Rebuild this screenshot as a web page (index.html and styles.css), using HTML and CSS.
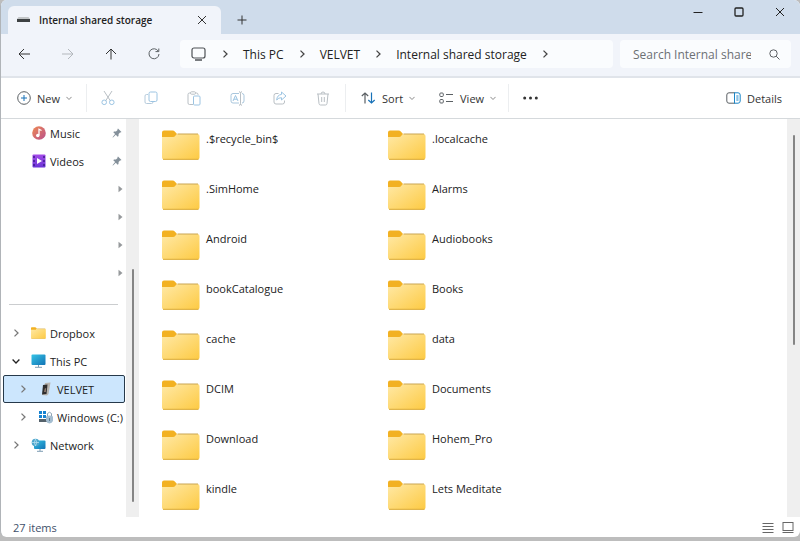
FILE: index.html
```html
<!DOCTYPE html>
<html lang="en">
<head>
	<meta charset="utf-8">
	<title>Internal shared storage</title>
	<link rel="stylesheet" href="styles.css">
</head>
<body>
	<!-- shared icons -->
	<svg class="defs" width="0" height="0" aria-hidden="true">
		<defs>
			<linearGradient id="folderFill" x1="0" y1="0" x2="1" y2="1">
				<stop offset="0" stop-color="#ffe9a6"/>
				<stop offset="1" stop-color="#fdca43"/>
			</linearGradient>
			<linearGradient id="screenFill" x1="0" y1="0" x2="1" y2="1">
				<stop offset="0" stop-color="#35c4e6"/>
				<stop offset="1" stop-color="#1273b5"/>
			</linearGradient>
			<linearGradient id="musicFill" x1="0" y1="0" x2="1" y2="1">
				<stop offset="0" stop-color="#ef8a52"/>
				<stop offset="1" stop-color="#b94f8d"/>
			</linearGradient>
			<linearGradient id="videoFill" x1="0" y1="0" x2="0" y2="1">
				<stop offset="0" stop-color="#a44be8"/>
				<stop offset="1" stop-color="#6a35d6"/>
			</linearGradient>
		</defs>
		<symbol id="folder" viewBox="0 0 38 30">
			<path d="M0 10V2.5Q0 .5 2 .5H10.5Q12 .5 13 1.8L15 4L12 10Z" fill="#f2b122"/>
			<path d="M0 7H11Q12.5 7 13.5 5.5Q14.5 4 16 4H35.5Q37.5 4 37.5 6V27.5Q37.5 29.5 35.5 29.5H2Q0 29.5 0 27.5Z" fill="url(#folderFill)"/>
			<path d="M15.5 4H36" fill="none" stroke="#c9a553"/>
			<path d="M1 29.3H36.5" fill="none" stroke="#d9a833"/>
		</symbol>
		<symbol id="right" viewBox="0 0 8 8">
			<path d="M2.5 .6L6 4L2.5 7.4" fill="none" stroke="currentColor" stroke-width="1.3"/>
		</symbol>
		<symbol id="down" viewBox="0 0 8 8">
			<path d="M.6 2.5L4 6L7.4 2.5" fill="none" stroke="currentColor" stroke-width="1.3"/>
		</symbol>
		<symbol id="close" viewBox="0 0 10 10">
			<path d="M1 1L9 9M9 1L1 9" fill="none" stroke="currentColor"/>
		</symbol>
		<symbol id="pin" viewBox="0 0 10 10">
			<path d="M6 .5L9.5 4L8.5 4.6L8 4.4L6.6 6L6.5 8L5.7 8.7L3.8 6.8L1 9.4L.5 9.2L3.1 6.1L1.3 4.3L2 3.5L4 3.4L5.6 2L5.4 1.3Z" fill="#84909a"/>
		</symbol>
		<symbol id="arrow" viewBox="0 0 8 10">
			<path d="M1.5 1.8L5.5 5L1.5 8.2Z" fill="#96999c"/>
		</symbol>
	</svg>

	<div class="window">
		<header class="titlebar">
			<div class="tab">
				<svg class="drive" width="13" height="6" viewBox="0 0 13 6"><path d="M1.5 0H11.5L13 2H0Z" fill="#c3c6c8"/><path d="M0 2H13V5H0Z" fill="#3d4143"/></svg>
				<span class="tab-title">Internal shared storage</span>
				<button class="tab-close" aria-label="Close tab"><svg width="10" height="10"><use href="#close"/></svg></button>
			</div>
			<button class="tab-add" aria-label="New tab"><svg width="10" height="10" viewBox="0 0 10 10"><path d="M5 .5V9.5M.5 5H9.5" stroke="currentColor"/></svg></button>
			<div class="controls">
				<button aria-label="Minimize"><svg width="10" height="10" viewBox="0 0 10 10"><path d="M.5 5.5H9.5" stroke="currentColor"/></svg></button>
				<button aria-label="Maximize"><svg width="10" height="10" viewBox="0 0 10 10"><rect x="1" y="1" width="8" height="8" rx="1" fill="none" stroke="currentColor" stroke-width="1.3"/></svg></button>
				<button aria-label="Close"><svg width="10" height="10"><use href="#close"/></svg></button>
			</div>
		</header>

		<nav class="navbar">
			<div class="history">
				<button aria-label="Back"><svg width="13" height="12" viewBox="0 0 13 12"><path d="M12 6H1M6 1L1 6L6 11" fill="none" stroke="currentColor"/></svg></button>
				<button aria-label="Forward" disabled><svg width="13" height="12" viewBox="0 0 13 12"><path d="M1 6H12M7 1L12 6L7 11" fill="none" stroke="currentColor"/></svg></button>
				<button aria-label="Up"><svg width="12" height="12" viewBox="0 0 12 12"><path d="M6 11.5V1M1 6L6 1L11 6" fill="none" stroke="currentColor"/></svg></button>
				<button aria-label="Refresh"><svg width="12" height="12" viewBox="0 0 12 12"><path d="M10.3 3.2A5 5 0 1 0 11 6M10.8 .5V3.6H7.5" fill="none" stroke="#5b6064"/></svg></button>
			</div>
			<div class="address">
				<svg class="device" width="15" height="14" viewBox="0 0 15 14"><rect x="1" y="1" width="13" height="10" rx="2" fill="none" stroke="#4c5054" stroke-width="1.2"/><path d="M4 13H11" stroke="#4c5054" stroke-width="1.4"/></svg>
				<svg class="sep" width="8" height="8"><use href="#right"/></svg>
				<a href="#">This PC</a>
				<svg class="sep" width="8" height="8"><use href="#right"/></svg>
				<a href="#">VELVET</a>
				<svg class="sep" width="8" height="8"><use href="#right"/></svg>
				<a href="#">Internal shared storage</a>
				<svg class="sep" width="8" height="8"><use href="#right"/></svg>
			</div>
			<div class="search">
				<input type="text" aria-label="Search" placeholder="Search Internal shared storage">
				<svg width="11" height="11" viewBox="0 0 11 11"><circle cx="4.5" cy="4.5" r="3.7" fill="none" stroke="#5c6064"/><path d="M7.2 7.2L10.5 10.5" stroke="#5c6064"/></svg>
			</div>
		</nav>

		<div class="toolbar">
			<div class="group new">
				<button class="command">
					<svg width="14" height="14" viewBox="0 0 14 14"><circle cx="7" cy="7" r="6.3" fill="none" stroke="#5b6064"/><path d="M7 4V10M4 7H10" stroke="#1872b8"/></svg>
					New
					<svg class="more" width="6" height="6"><use href="#down"/></svg>
				</button>
			</div>
			<div class="group actions">
				<button aria-label="Cut" disabled><svg width="14" height="16" viewBox="0 0 14 16" fill="none"><path d="M3 1L9.5 11M11 1L4.5 11" stroke="#b9bfc4"/><circle cx="3.2" cy="12.3" r="2.3" stroke="#9cc4e2"/><circle cx="10.8" cy="12.3" r="2.3" stroke="#9cc4e2"/></svg></button>
				<button aria-label="Copy" disabled><svg width="14" height="14" viewBox="0 0 14 14" fill="none"><path d="M4 3.5H2.5Q1 3.5 1 5V11Q1 12.5 2.5 12.5H7.5Q9 12.5 9 11" stroke="#b5cadb"/><rect x="5" y="1" width="8" height="9.5" rx="1.5" stroke="#9cc4e2"/></svg></button>
				<button aria-label="Paste" disabled><svg width="14" height="15" viewBox="0 0 14 15" fill="none"><path d="M6 13.5H2.5Q1 13.5 1 12V3.5Q1 2 2.5 2H3.5M8.5 2H9.5Q11 2 11 3.5V4" stroke="#b9bfc4"/><rect x="3.5" y=".8" width="5" height="2.4" rx="1" stroke="#b9bfc4"/><rect x="6.5" y="5" width="6.5" height="9" rx="1" stroke="#9cc4e2"/></svg></button>
				<button aria-label="Rename" disabled><svg width="15" height="15" viewBox="0 0 15 15" fill="none"><path d="M9 2.5H3Q1 2.5 1 4.5V10Q1 12 3 12H9M12 2.5Q14 2.5 14 4.5V10Q14 12 12 12" stroke="#a9c6dc"/><path d="M9 .7Q10.5 .7 10.5 2.2V12.8Q10.5 14.3 9 14.3M12 .7Q10.5 .7 10.5 2.2M12 14.3Q10.5 14.3 10.5 12.8" stroke="#b9bfc4"/><path d="M3 10L5.5 4.5L8 10M4 8.2H7" stroke="#9cc4e2"/></svg></button>
				<button aria-label="Share" disabled><svg width="14" height="14" viewBox="0 0 14 14" fill="none"><path d="M5.5 2.5H3Q1 2.5 1 4.5V11Q1 13 3 13H9.5Q11.5 13 11.5 11V9.5" stroke="#b9bfc4"/><path d="M8.5 1L13 5L8.5 9V6.7Q5.5 6.5 3.7 9Q4 4 8.5 3.4Z" stroke="#9cc4e2"/></svg></button>
				<button aria-label="Delete" disabled><svg width="14" height="15" viewBox="0 0 14 15" fill="none" stroke="#b9bfc4"><path d="M1 3H13M5 3Q5 1 7 1Q9 1 9 3M2 3L3 12.5Q3.2 14 4.5 14H9.5Q10.8 14 11 12.5L12 3M5.7 6V11M8.3 6V11"/></svg></button>
			</div>
			<div class="group arrange">
				<button class="command">
					<svg width="15" height="12" viewBox="0 0 15 12" fill="none"><path d="M4 11.5V1M.8 4L4 1L7.2 4" stroke="#5b6064" stroke-width="1.2"/><path d="M10.5 .5V11M7.3 8L10.5 11L13.7 8" stroke="#1872b8" stroke-width="1.2"/></svg>
					Sort
					<svg class="more" width="6" height="6"><use href="#down"/></svg>
				</button>
				<button class="command">
					<svg width="15" height="12" viewBox="0 0 15 12" fill="none" stroke="#5b6064"><rect x=".8" y="1" width="3.5" height="3.5" rx="1"/><rect x=".8" y="7.5" width="3.5" height="3.5" rx="1"/><path d="M7 2.5H14M7 9.5H14"/></svg>
					View
					<svg class="more" width="6" height="6"><use href="#down"/></svg>
				</button>
			</div>
			<button class="dots" aria-label="See more"><svg width="15" height="4" viewBox="0 0 15 4" fill="#333"><circle cx="1.7" cy="2" r="1.5"/><circle cx="7.5" cy="2" r="1.5"/><circle cx="13.3" cy="2" r="1.5"/></svg></button>
			<button class="command details">
				<svg width="15" height="12" viewBox="0 0 15 12" fill="none"><path d="M9 .8H3Q.8 .8 .8 3V9Q.8 11.2 3 11.2H9" stroke="#5b6064"/><path d="M8.5 .8H12Q14.2 .8 14.2 3V9Q14.2 11.2 12 11.2H8.5ZM10.3 4H12.5M10.3 6H12.5M10.3 8H12.5" stroke="#1b86c8"/></svg>
				Details
			</button>
		</div>

		<div class="content">
			<aside class="sidebar">
				<ul class="tree">
					<li><a class="quick" href="#"><svg width="14" height="14" viewBox="0 0 14 14"><circle cx="7" cy="7" r="6.8" fill="url(#musicFill)"/><path d="M7 9.3V3.2L9.5 4.5" fill="none" stroke="#fff" stroke-width="1.3"/><circle cx="5.8" cy="9.5" r="1.7" fill="#fff"/></svg>Music<svg class="mark" width="10" height="10"><use href="#pin"/></svg></a></li>
					<li><a class="quick" href="#"><svg width="14" height="14" viewBox="0 0 14 14"><rect x=".5" y=".5" width="13" height="13" rx="1" fill="url(#videoFill)"/><path d="M2 2V12M12 2V12" stroke="#3c1c8e" stroke-width="1.5" stroke-dasharray="2 2"/><path d="M5 4L10 7L5 10Z" fill="#fff"/></svg>Videos<svg class="mark" width="10" height="10"><use href="#pin"/></svg></a></li>
					<li class="blank"><svg width="8" height="10"><use href="#arrow"/></svg></li>
					<li class="blank"><svg width="8" height="10"><use href="#arrow"/></svg></li>
					<li class="blank"><svg width="8" height="10"><use href="#arrow"/></svg></li>
					<li class="blank"><svg width="8" height="10"><use href="#arrow"/></svg></li>
				</ul>
				<hr>
				<ul class="tree">
					<li><a href="#"><svg class="toggle" width="8" height="8"><use href="#right"/></svg><svg width="15" height="12" viewBox="0 0 38 30"><use href="#folder"/></svg>Dropbox</a></li>
					<li><a href="#"><svg class="toggle open" width="8" height="8"><use href="#down"/></svg><svg width="15" height="14" viewBox="0 0 15 14"><rect x=".5" y=".5" width="14" height="10.5" rx="1" fill="url(#screenFill)"/><path d="M7.5 11V13M4 13.3H11" stroke="#7d9db3"/></svg>This PC</a></li>
					<li><a class="child selected" href="#"><svg class="toggle" width="8" height="8"><use href="#right"/></svg><svg width="15" height="14" viewBox="0 0 15 14"><path d="M7 1L12.5 .5L10.5 12L9 13.5L4 13Z" fill="#b7b4af"/><path d="M5 3L9.5 2.5L8.5 12L4 12.5Z" fill="#2e2d2e"/><path d="M6.8 6.5L8.2 6L7.8 10L6 10Z" fill="#8f7c70"/></svg>VELVET</a></li>
					<li><a class="child" href="#"><svg class="toggle" width="8" height="8"><use href="#right"/></svg><svg width="15" height="14" viewBox="0 0 15 14"><path d="M1 1H4V4H1ZM5 1H8V4H5ZM1 5H4V8H1ZM5 5H8V8H5Z" fill="#1683d1"/><path d="M1 9H9V12H1Z" fill="#55626b"/><path d="M8 6.5Q11.5 4.5 15 6.5V11Q14 13 11.5 13.5Q9 13 8 11Z" fill="#a4bdd0"/><path d="M9.5 6V3.5Q11.5 1 13.5 3.5V6" fill="none" stroke="#8da4b5"/><path d="M11.5 8V11" stroke="#5c7c94"/></svg>Windows (C:)</a></li>
					<li><a href="#"><svg class="toggle" width="8" height="8"><use href="#right"/></svg><svg width="15" height="14" viewBox="0 0 15 14"><rect x="3" y="2.5" width="11.5" height="8.5" rx="1" fill="url(#screenFill)"/><path d="M9 11V13M6 13.3H12" stroke="#7d9db3"/><circle cx="4.5" cy="4.5" r="3.8" fill="#4ba5cc"/><path d="M1 4.5H8M4.5 1Q2 4.5 4.5 8M4.5 1Q7 4.5 4.5 8" fill="none" stroke="#bfe4f2" stroke-width=".7"/></svg>Network</a></li>
				</ul>
			</aside>
			<div class="track side-track"><div class="thumb"></div></div>
			<main class="files">
				<a href="#"><svg width="38" height="30"><use href="#folder"/></svg>.$recycle_bin$</a>
				<a href="#"><svg width="38" height="30"><use href="#folder"/></svg>.localcache</a>
				<a href="#"><svg width="38" height="30"><use href="#folder"/></svg>.SimHome</a>
				<a href="#"><svg width="38" height="30"><use href="#folder"/></svg>Alarms</a>
				<a href="#"><svg width="38" height="30"><use href="#folder"/></svg>Android</a>
				<a href="#"><svg width="38" height="30"><use href="#folder"/></svg>Audiobooks</a>
				<a href="#"><svg width="38" height="30"><use href="#folder"/></svg>bookCatalogue</a>
				<a href="#"><svg width="38" height="30"><use href="#folder"/></svg>Books</a>
				<a href="#"><svg width="38" height="30"><use href="#folder"/></svg>cache</a>
				<a href="#"><svg width="38" height="30"><use href="#folder"/></svg>data</a>
				<a href="#"><svg width="38" height="30"><use href="#folder"/></svg>DCIM</a>
				<a href="#"><svg width="38" height="30"><use href="#folder"/></svg>Documents</a>
				<a href="#"><svg width="38" height="30"><use href="#folder"/></svg>Download</a>
				<a href="#"><svg width="38" height="30"><use href="#folder"/></svg>Hohem_Pro</a>
				<a href="#"><svg width="38" height="30"><use href="#folder"/></svg>kindle</a>
				<a href="#"><svg width="38" height="30"><use href="#folder"/></svg>Lets Meditate</a>
			</main>
			<div class="track main-track"><div class="thumb"></div></div>
		</div>

		<footer class="statusbar">
			<span>27 items</span>
			<div class="views">
				<button aria-label="List view"><svg width="12" height="11" viewBox="0 0 12 11"><path d="M.5 1.5H11.5M.5 4.5H11.5M.5 7.5H11.5M.5 10.5H11.5" stroke="#666"/></svg></button>
				<button aria-label="Icon view"><svg width="12" height="11" viewBox="0 0 12 11"><rect x="1" y=".5" width="10" height="8" fill="none" stroke="#666"/><path d="M.5 10.5H11.5" stroke="#666"/></svg></button>
			</div>
		</footer>
	</div>
</body>
</html>
```
FILE: styles.css
```css
* {
	box-sizing: border-box;
}

body {
	margin: 0;
	height: 100vh;
	padding-bottom: 4px;
	background-color: #bdbdbd;
	font-family: "Open Sans", "Noto Sans", sans-serif;
	font-size: 11px;
	color: #222;
}

svg {
	flex-shrink: 0;
}

.defs {
	position: absolute;
}

a {
	color: inherit;
	text-decoration: none;
}

button {
	display: flex;
	align-items: center;
	justify-content: center;
	padding: 0;
	border: none;
	background: none;
	font: inherit;
	color: #333;
}

.window {
	display: flex;
	flex-direction: column;
	height: 100%;
	overflow: hidden;
	border-left: 1px solid #b0b4b8;
	border-radius: 6px;
	background-color: white;
}

/* tabs */
.titlebar {
	display: flex;
	height: 34px;
	padding-left: 7px;
	background-color: #cfdceb;
}

.tab {
	display: flex;
	align-items: center;
	width: 213px;
	margin-top: 6px;
	padding: 0 14px 0 9px;
	border-radius: 6px 6px 0 0;
	background-color: #f1f4fa;
	font-size: 10px;
	font-weight: 600;
}

.tab-title {
	flex: 1;
	margin-left: 9px;
}

.tab-add {
	width: 41px;
	padding-top: 6px;
}

.controls {
	display: flex;
	height: 24px;
	margin-left: auto;
}

.controls button {
	width: 41px;
	color: #222;
}

/* address row */
.navbar {
	display: flex;
	align-items: center;
	height: 44px;
	padding: 0 9px 2px 2px;
	border-bottom: 2px solid #e0e4ea;
	background-color: #f1f4fa;
	font-size: 12px;
}

.history {
	display: flex;
	width: 177px;
}

.history button {
	width: 43px;
	height: 28px;
}

.history button:disabled {
	color: #b3b7bc;
}

.address, .search {
	display: flex;
	align-items: center;
	height: 28px;
	border-radius: 4px;
	background-color: #fafcfe;
}

.address {
	flex: 1;
	padding-left: 11px;
}

.device {
	margin-right: 1px;
}

.sep {
	margin: 0 14px;
	color: #444;
}

.search {
	width: 171px;
	margin-left: 7px;
	padding: 0 11px 0 13px;
}

.search input {
	flex: 1;
	min-width: 0;
	margin-right: 18px;
	padding: 0;
	border: none;
	outline: none;
	background: none;
	font: inherit;
}

.search input::placeholder {
	color: #6c7074;
}

/* commands */
.toolbar {
	display: flex;
	align-items: center;
	height: 41px;
	border-bottom: 1px solid #d5d9dc;
}

.group {
	display: flex;
	align-items: center;
	height: 28px;
	border-right: 1px solid #eceef0;
}

.command {
	gap: 6px;
}

.more {
	color: #888;
}

.new {
	padding: 0 14px 0 16px;
}

.actions button {
	width: 43px;
}

.arrange {
	gap: 24px;
	padding: 0 12px 0 15px;
}

.dots {
	width: 43px;
}

.details {
	margin-left: auto;
	margin-right: 18px;
}

/* folder tree and files */
.content {
	display: flex;
	flex: 1;
	min-height: 0;
}

.sidebar {
	width: 125px;
	overflow: hidden;
}

.tree {
	margin: 0;
	padding: 0 1px 0 2px;
	list-style: none;
}

.tree li, .tree a {
	display: flex;
	align-items: center;
	height: 28px;
	white-space: nowrap;
}

.tree a {
	flex: 1;
	gap: 4px;
	padding-left: 8px;
	border: 1px solid transparent;
}

.tree .quick {
	padding: 0 2px 0 28px;
}

.tree .child {
	padding-left: 15px;
}

.tree .selected {
	border-color: #26394a;
	border-radius: 2px;
	background-color: #cce6fd;
}

.mark {
	margin-left: auto;
}

.tree .blank {
	justify-content: flex-end;
}

.toggle {
	margin-right: 7px;
	color: #777;
}

.open {
	color: #222;
}

hr {
	height: 1px;
	margin: 17px 8px 14px;
	border: none;
	background-color: #cbcdcf;
}

.track {
	display: grid;
	justify-content: center;
	width: 13px;
	background-color: #efefef;
}

.thumb {
	grid-row: 2;
	width: 2px;
	border-radius: 1px;
	background-color: #858585;
}

.side-track {
	grid-template-rows: 150fr 233fr 15fr;
}

.main-track {
	grid-template-rows: 16fr 210fr 172fr;
}

.files {
	display: grid;
	flex: 1;
	grid-template-columns: 226px 226px;
	grid-auto-rows: 30px;
	gap: 20px 0;
	padding: 11px 0 0 23px;
	overflow: hidden;
}

.files a {
	display: flex;
	gap: 6px;
	line-height: 17px;
}

/* bottom bar */
.statusbar {
	display: flex;
	align-items: center;
	justify-content: space-between;
	height: 20px;
	padding: 0 6px 0 12px;
	color: #41506a;
}

.views {
	display: flex;
	gap: 8px;
}
```
